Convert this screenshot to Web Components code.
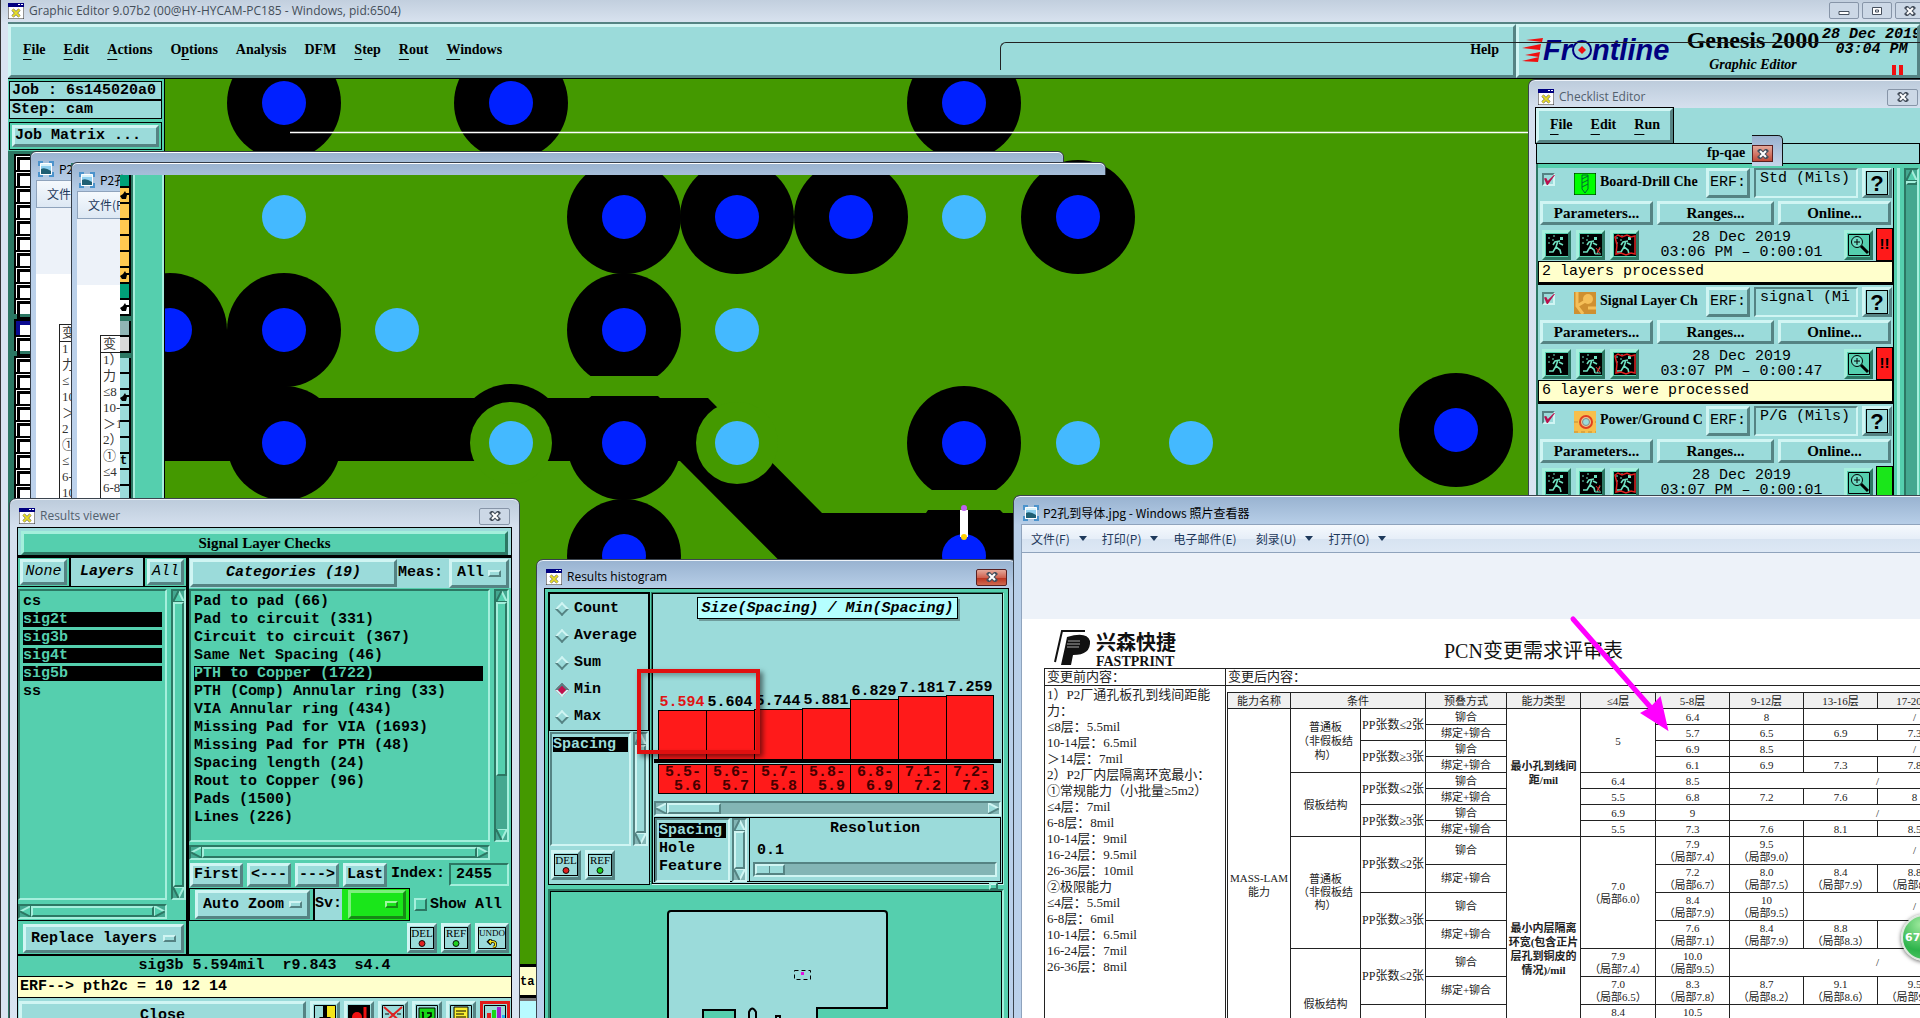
<!DOCTYPE html>
<html lang="zh-CN">
<head>
<meta charset="utf-8">
<title>Graphic Editor</title>
<style>
  html, body {
    margin: 0;
    height: 100%;
    overflow: hidden;
  }

  body {
    position: relative;
    font: 15px/18px "Liberation Mono", monospace;
    color: #000;
    --cyan: #9bdbda;
    --teal: #55cfae;
    --cyan-hi: #d0f5f3;
    --cyan-lo: #558383;
    --teal-hi: #a5efdc;
    --teal-lo: #2c7763;
  }

  /* windows on the desktop */
  ge-editor { height: 100%; }
  ghost-window, desk-window, fish-arrow, speed-ball { position: absolute; }
  #ghost-a { left: 30px; top: 151px; width: 1034px; height: 350px; clip-path: polygon(0 0, 100% 0, 100% 12px, 41px 12px, 41px 100%, 0 100%); }
  #ghost-b { left: 71px; top: 162px; width: 1035px; height: 340px; clip-path: polygon(0 0, 100% 0, 100% 13px, 49px 13px, 49px 100%, 0 100%); }
  #checklist { left: 1528px; right: 0; top: 79px; height: 420px; }
  #results { left: 9px; top: 498px; width: 511px; height: 560px; }
  #histogram { left: 536px; top: 559px; width: 481px; height: 480px; }
  #photo { left: 1013px; right: 0; top: 495px; height: 560px; }
  fish-arrow { left: 1560px; top: 606px; }
  speed-ball { right: -28px; top: 914px; }
</style>
</head>
<body>

<ge-editor></ge-editor>

<ghost-window id="ghost-a" heading="P2" menu="文件">
  变<br>1<br>力<br>≤<br>10<br>＞<br>2<br>①<br>≤<br>6-<br>10
</ghost-window>
<ghost-window id="ghost-b" heading="P2孔" menu="文件(F">
  变<br>1）<br>力<br>≤8<br>10-<br>＞1<br>2）<br>①<br>≤4<br>6-8
</ghost-window>

<desk-window id="checklist" heading="Checklist Editor" open-end>
  <checklist-editor>
    <check-item name="Board-Drill Che" erf="Std (Mils)" time="03:06 PM – 0:00:01" note="2 layers processed" icon="drill" flag="!!" first></check-item>
    <check-item name="Signal Layer Ch" erf="signal (Mi" time="03:07 PM – 0:00:47" note="6 layers were processed" icon="signal" flag="!!"></check-item>
    <check-item name="Power/Ground C" erf="P/G (Mils)" time="03:07 PM – 0:00:01" note="" icon="power" flag=""></check-item>
  </checklist-editor>
</desk-window>

<desk-window id="results" heading="Results viewer">
  <results-viewer></results-viewer>
</desk-window>

<desk-window id="histogram" heading="Results histogram" active>
  <results-histogram></results-histogram>
</desk-window>

<desk-window id="photo" heading="P2孔到导体.jpg - Windows 照片查看器" kind="photo" active open-end>
  <photo-viewer></photo-viewer>
</desk-window>

<fish-arrow></fish-arrow>
<speed-ball></speed-ball>

<script>
const define = (name, html, setup) => {
  const template = document.createElement('template')
  template.innerHTML = html
  customElements.define(name, class extends HTMLElement {
    constructor() {
      super()
      this.attachShadow({ mode: 'open' }).appendChild(template.content.cloneNode(true))
    }
    connectedCallback() {
      if (setup) setup(this, this.shadowRoot)
    }
  })
}

// rules every panel shares
const base = `
  * { box-sizing: border-box; }
  button, input, select { font: inherit; color: inherit; margin: 0; padding: 0; border-radius: 0; }
  .out { border: 3px solid; border-color: var(--cyan-hi) var(--cyan-lo) var(--cyan-lo) var(--cyan-hi); background: var(--cyan); }
  .in { border: 2px solid; border-color: var(--cyan-lo) var(--cyan-hi) var(--cyan-hi) var(--cyan-lo); }
  .teal-out { border: 3px solid; border-color: var(--teal-hi) var(--teal-lo) var(--teal-lo) var(--teal-hi); background: var(--teal); }
  .teal-in { border: 2px solid; border-color: var(--teal-lo) var(--teal-hi) var(--teal-hi) var(--teal-lo); }
  .serif { font: bold 15px/18px "Liberation Serif", serif; }
  .small { font-size: 14px; }
  b.u { text-decoration: underline; text-underline-offset: 5px; font-weight: inherit; }
  ul { list-style: none; margin: 0; padding: 0; }
`

const xIcon = `
  <svg width="16" height="16" viewBox="0 0 16 16">
    <path d="M0 1h16v15H0z" fill="#fff" stroke="#222"/><path d="M0 0h16v4H0z" fill="#000080"/><path d="M10 1h2v1h-2zM13 1h2v1h-2z" fill="#fff"/>
    <path d="M4.500 6.500l7 7M11.500 6.500l-7 7" stroke="#555" stroke-width="3"/><path d="M4.500 6.500l7 7M11.500 6.500l-7 7" stroke="#e6dc2c" stroke-width="2"/>
  </svg>`

const photoIcon = `
  <svg width="16" height="16" viewBox="0 0 16 16">
    <path d="M1 5V1h4M11 1h4v4M15 11v4h-4M5 15H1v-4" fill="none" stroke="#4b93cc" stroke-width="2"/>
    <path d="M2.500 2.500h11v11h-11z" fill="#8fd0f0" stroke="#fff"/><path d="M3 8q4-2 10 2v3H3z" fill="#1f5f74"/><path d="M3 3h10v2H3z" fill="#d9f2fb"/>
  </svg>`

const cross = `
  <svg width="12" height="10" viewBox="0 0 12 10">
    <path d="M3 2l6 6M9 2L3 8" stroke="#454f5c" stroke-width="4.200" stroke-linecap="square"/>
    <path d="M3 2l6 6M9 2L3 8" stroke="#fff" stroke-width="2"/>
  </svg>`

define('desk-window', `
  <style>
    ${base}
    :host {
      display: flex;
      flex-direction: column;
      box-sizing: border-box;
      padding: 0 7px;
      border: 1px solid #3b444e;
      border-radius: 7px 7px 0 0;
      background: linear-gradient(#bccbdb, #d5e0ee 28px, #d9e4f1);
      overflow: hidden;
      box-shadow: inset 0 1px #eef3f9;
    }
    :host([active]) { background: linear-gradient(#98b2d0, #b8cfe8 29px, #bbd1ec); }
    :host([open-end]) { padding-right: 0; border-right: 0; border-top-right-radius: 0; }
    header {
      display: flex;
      align-items: center;
      gap: 5px;
      flex: none;
      height: 28px;
      padding: 6px 2px 0;
      font: 12px/18px "Open Sans", "Noto Sans CJK SC", sans-serif;
      color: #52606d;
    }
    :host([active]) header { color: #000; }
    span { flex: 1; white-space: nowrap; }
    button {
      display: grid;
      place-items: center;
      width: 31px;
      height: 17px;
      border: 1px solid #8795a8;
      border-radius: 2px;
      background: #ccd8e6;
    }
    :host([active]) button { border-color: #5a2020; background: linear-gradient(#e5a99b, #cf6250 50%, #b8301c 51%, #d06a50); }
    :host([kind=photo]) button { display: none; }
    :host([kind=photo]) header { font-family: "Noto Sans CJK SC", sans-serif; gap: 4px; }
    slot { display: block; flex: 1; min-height: 0; }
  </style>
  <header><i></i><span></span><button aria-label="Close">${cross}</button></header>
  <slot></slot>
`, (el, root) => {
  root.querySelector('span').textContent = el.getAttribute('heading')
  root.querySelector('i').outerHTML = el.getAttribute('kind') === 'photo' ? photoIcon : xIcon
})

define('ghost-window', `
  <style>
    ${base}
    :host {
      display: flex;
      flex-direction: column;
      box-sizing: border-box;
      padding: 0 6px 0 5px;
      border: 1px solid #333b46;
      border-radius: 6px 6px 0 0;
      background: linear-gradient(#9ab3d0, #b9cfe8 30px, #bdd2ec);
      box-shadow: inset 0 1px #fff;
      overflow: hidden;
    }
    header, nav { flex: none; display: flex; align-items: center; font: 12px/18px "Noto Sans CJK SC", sans-serif; white-space: nowrap; }
    header { height: 28px; gap: 5px; padding: 6px 2px 0; }
    nav { height: 28px; padding-left: 10px; color: #1e395b; border: 1px solid #8fa3bc; background: linear-gradient(#f5f9fd, #dde8f4); }
    .gap { flex: none; height: 66px; background: #edf2f9; }
    main { flex: 1; background: #fff; padding: 50px 0 0 23px; }
    p { margin: 0; padding-left: 2px; border: solid #222; border-width: 1px 0 0 1px; height: 400px; font: 13px/16px "Liberation Serif", "Noto Sans CJK SC", serif; color: #333; white-space: nowrap; background: linear-gradient(#222, #222) 0 16px / 100% 1px no-repeat; }
  </style>
  <header>${photoIcon}<span></span></header>
  <nav></nav>
  <div class="gap"></div>
  <main><p><slot></slot></p></main>
`, (el, root) => {
  root.querySelector('span').textContent = el.getAttribute('heading')
  root.querySelector('nav').textContent = el.getAttribute('menu')
})

define('motif-scroll', `
  <style>
    ${base}
    :host { display: flex; box-sizing: border-box; height: 15px; --hi: var(--teal-hi); --lo: var(--teal-lo); --face: var(--teal); --trough: #44a890; border: 2px solid; border-color: var(--lo) var(--hi) var(--hi) var(--lo); background: var(--trough); }
    :host([cyan]) { --hi: var(--cyan-hi); --lo: var(--cyan-lo); --face: var(--cyan); --trough: #83b5b5; }
    :host([vertical]) { flex-direction: column; width: 15px; height: auto; }
    svg { flex: none; width: 11px; height: 11px; fill: var(--face); }
    :host([vertical]) svg { transform: rotate(90deg); }
    i { flex: 0 1 var(--thumb, 100%); border: 2px solid; border-color: var(--hi) var(--lo) var(--lo) var(--hi); background: var(--face); }
    s { flex: 1 0 0px; }
  </style>
  <svg viewBox="0 0 11 11"><path d="M11 0L0 5.500 11 11z"/><path d="M11 0L0 5.500" stroke="var(--hi)" stroke-width="2"/><path d="M0 5.500L11 11V0" fill="none" stroke="var(--lo)" stroke-width="2"/></svg>
  <i></i><s></s>
  <svg viewBox="0 0 11 11"><path d="M0 0l11 5.500L0 11z"/><path d="M0 11V0l11 5.500" fill="none" stroke="var(--hi)" stroke-width="2"/><path d="M11 5.500L0 11" stroke="var(--lo)" stroke-width="2"/></svg>
`)

define('motif-option', `
  <style>
    ${base}
    :host { display: block; font-weight: bold; }
    .out { display: flex; align-items: center; height: 29px; padding: 0 5px; }
    select { flex: 1; min-width: 0; appearance: none; border: 0; background: none; }
    i { width: 13px; height: 7px; border: 2px solid; border-color: var(--cyan-hi) var(--cyan-lo) var(--cyan-lo) var(--cyan-hi); }
    :host([green]) .out { background: #1ae61a; border-color: #7cf07c #168a16 #168a16 #7cf07c; }
    :host([green]) i { border-color: #a0f8a0 #168a16 #168a16 #a0f8a0; }
  </style>
  <div class="out"><select><option></option></select><i></i></div>
`, (el, root) => {
  root.querySelector('option').textContent = el.getAttribute('value')
  root.querySelector('select').setAttribute('aria-label', el.getAttribute('name'))
})

// DEL / REF / UNDO
define('tag-button', `
  <style>
    ${base}
    :host { display: block; }
    button { display: block; width: 30px; height: 30px; padding: 1px 0; }
    span { display: flex; flex-direction: column; align-items: center; height: 22px; border: 1px solid #000; font: 11px/11px "Liberation Serif", serif; }
    :host([wide]) button { width: 34px; }
    :host([wide]) span { font-size: 9px; }
    svg { flex: none; }
  </style>
  <button class="out"><span><slot></slot><svg width="12" height="9" viewBox="0 0 12 10"><circle cx="6" cy="5" r="3.300" stroke="#000"/></svg></span></button>
`, (el, root) => {
  const svg = root.querySelector('svg')
  if (el.hasAttribute('wide')) svg.innerHTML = '<path d="M3 3h4q3 0 3 3t-3 3M5 0L2 3l3 3" fill="none" stroke="#000" stroke-width="3"/><path d="M3 3h4q3 0 3 3t-3 3M5 1L3 3l2 2" fill="none" stroke="#f5e51b" stroke-width="1.400"/>'
  else svg.firstChild.setAttribute('fill', el.getAttribute('dot'))
})

/* ---------- main editor ---------- */

define('pcb-board', `
  <style>
    :host { display: block; background: #449900; overflow: hidden; }
    svg { display: block; width: 100%; height: 100%; }
  </style>
  <svg><g transform="translate(-165 -79)"></g></svg>
`, (el, root) => {
  const g = root.querySelector('g')
  const green = '#449900'
  const dot = (x, y, r, fill) => `<circle cx="${x}" cy="${y}" r="${r}" fill="${fill}"/>`
  const holes = [
    [284, 103], [511, 103], [964, 103],
    [624, 217], [737, 217], [851, 217], [1078, 217],
    [170, 330], [284, 330], [624, 330],
    [284, 443], [624, 443], [964, 443], [1456, 430],
    [624, 556], [964, 556]
  ]
  const vias = [[284, 217], [964, 217], [397, 330], [737, 330], [511, 443], [737, 443], [1078, 443], [1191, 443]]
  let out = holes.map(([x, y]) => dot(x, y, 57, '#000')).join('')
  // flats where a pad meets copper
  out += `<path d="M580 376h88v20h-88zM915 490h98v20h-98z" fill="${green}"/>`
  out += '<path d="M454 443a57 59 0 0 1 114 0z"/>'
  out += '<path d="M165 330H284V398H590L592 396H658L660 398H708L822 513H926L928 510H1000L1003 513H1530V700H918L680 461H165z"/>'
  out += dot(511, 443, 41, green) + dot(737, 443, 41, green)
  holes.forEach(([x, y]) => { out += dot(x, y, 22, '#0020ff') })
  vias.forEach(([x, y]) => { out += dot(x, y, 22, '#44b9ff') })
  out += '<path d="M290 132.500H1530" stroke="#fff" stroke-width="1.500"/>'
  out += '<path d="M960 510h8v27h-8z" fill="#fff"/>' + dot(964, 508, 3, '#c060f0') + dot(964, 537, 3, '#ffd000')
  g.innerHTML = out
})

define('ge-editor', `
  <style>
    ${base}
    :host { display: grid; grid-template-rows: 22px 57px 1fr; background: #d9e4f1; border-left: 1px solid #333; padding-left: 7px; box-sizing: border-box; }
    header { display: flex; align-items: center; gap: 5px; margin-left: -7px; padding-left: 7px; overflow: hidden; background: linear-gradient(#c2cfde, #d8e2ef); font: 12px/18px "Open Sans", sans-serif; color: #444e59; }
    header span { flex: 1; }
    header button { display: grid; place-items: center; flex: none; align-self: start; margin-top: 2px; width: 30px; height: 17px; margin-right: -2px; border: 1px solid #8795a8; border-radius: 2px; background: #ccd8e6; }
    header button:last-child { margin-right: -5px; }
    .top { display: grid; grid-template-columns: 1fr 404px; border-bottom: 1px solid #000; border-top: 2px solid var(--cyan-lo); }
    nav { display: flex; gap: 18px; align-items: center; padding: 0 14px 3px 12px; }
    nav a { color: inherit; text-decoration: none; }
    .brand { display: grid; grid-template-columns: 162px 138px 1fr; padding-left: 3px; overflow: hidden; white-space: nowrap; }
    .logo { display: flex; align-items: center; font: italic bold 29px/30px "Liberation Sans", sans-serif; color: #000080; padding-bottom: 3px; }
    .logo svg { flex: none; }
    .name { display: grid; align-content: start; text-align: center; font: bold 24px/27px "Liberation Serif", serif; }
    .name em { font-size: 14px; line-height: 22px; }
    .clock { display: grid; align-content: start; justify-items: center; font: italic bold 15px/15px "Liberation Mono", monospace; }
    .clock svg { margin: 8px 0 0 52px; }
    .work { display: grid; grid-template-columns: 156px 1fr; min-height: 0; }
    aside { display: flex; flex-direction: column; min-height: 0; background: var(--teal-lo); }
    .job { flex: none; padding: 2px 2px 0 1px; height: 72px; background: var(--teal); font-weight: bold; }
    .job p { margin: 0; width: 124px; height: 19px; padding: 0 2px; border: 1px solid #000; background: var(--cyan); width: 100%; }
    .job div { margin-top: 3px; padding: 2px; border: 1px solid #000; background: var(--teal); }
    .job button { display: block; width: 100%; height: 22px; text-align: left; font-weight: bold; line-height: 14px; }
    .layers { display: flex; flex: 1; padding-left: 6px; min-height: 0; overflow: hidden; }
    .col { padding-top: 3px; width: 16px; }
    .col i { display: block; width: 16px; height: 16px; padding: 1px; border: solid #000; border-width: 2px 0 0 2px; background: #fff; }
    .col i::before { content: ""; display: block; width: 13px; height: 13px; border: 3px solid #000; }
    .col i.gap, .side i.gap { margin-top: 5px; }
    .col i.on { background: #0a0a90; }
    .col i.on::before { border-color: #0a0a90; background: #fff; }
    .side { width: 11px; margin-left: 90px; padding-top: 21px; }
    .side i { display: block; width: 11px; height: 16px; border-bottom: 2px solid #000; border-right: 2px solid #000; background: var(--c, var(--cyan)); font: bold 12px/14px "Liberation Mono", monospace; }
    .sash { width: 31px; margin-left: 2px; border: 2px solid var(--teal-hi); background: var(--teal); }
    .frame { position: absolute; left: 1000px; right: 0; top: 42px; height: 28px; border: solid #222; border-width: 1px 0 0 1px; border-radius: 6px 0 0 0; pointer-events: none; }
    .strip { position: absolute; left: 520px; top: 964px; width: 16px; height: 34px; padding-top: 8px; border-top: 3px solid #000; border-bottom: 3px solid #000; background: #ffffcc; font: bold 12px/14px "Liberation Mono", monospace; }
    .below { position: absolute; left: 520px; top: 998px; width: 16px; height: 30px; border-top: 3px solid #777; background: #b8fbff; }
    pcb-board { border-left: 1px solid #000; }
  </style>
  <header>
    ${xIcon}<span>Graphic Editor 9.07b2 (00@HY-HYCAM-PC185 - Windows, pid:6504)</span>
    <button aria-label="Minimize"><svg width="12" height="10"><path d="M1 5.500h10v3H1z" fill="#fff" stroke="#454f5c"/></svg></button>
    <button aria-label="Maximize"><svg width="12" height="10"><path d="M1.500 1.500h9v7h-9zM4.500 4h3v2h-3z" fill="#fff" stroke="#454f5c"/></svg></button>
    <button aria-label="Close">${cross}</button>
  </header>
  <div class="top">
    <nav class="out serif small">
      <a href="#"><b class="u">F</b>ile</a><a href="#"><b class="u">E</b>dit</a><a href="#"><b class="u">A</b>ctions</a><a href="#">O<b class="u">p</b>tions</a><a href="#">Analysis</a><a href="#">DFM</a><a href="#"><b class="u">S</b>tep</a><a href="#"><b class="u">R</b>out</a><a href="#"><b class="u">W</b>indows</a>
      <a href="#" style="margin-left: auto">Help</a>
    </nav>
    <div class="brand out">
      <div class="logo">
        <svg width="21" height="26" viewBox="0 0 21 26"><path d="M4 3l17-2-1 4zM0 11l19-4-1 6zM3 18l15-3-1 5zM0 24l17-4-1 5z" fill="#f01010"/></svg>Fr<svg width="20" height="22" viewBox="0 0 20 22"><circle cx="10" cy="11" r="9" fill="none" stroke="#000080" stroke-width="2"/><path d="M10 7l4 4-4 4-4-4z" fill="#f01010"/></svg>ntline
      </div>
      <div class="name">Genesis 2000<em>Graphic Editor</em></div>
      <div class="clock"><span>28 Dec 2019</span><span>03:04 PM</span><svg width="11" height="10"><path d="M0 0h4v10H0zM7 0h4v10H7z" fill="#f01010"/></svg></div>
    </div>
  </div>
  <div class="work">
    <aside>
      <div class="job">
        <p>Job : 6s145020a0</p>
        <p>Step: cam</p>
        <div><button class="out">Job Matrix ...</button></div>
      </div>
      <div class="layers"><div class="col"></div><div class="side"></div><div class="sash"></div></div>
    </aside>
    <pcb-board></pcb-board>
  </div>
  <div class="frame"></div>
  <div class="strip">ta</div>
  <div class="below"></div>
`, (el, root) => {
  const gaps = [10, 12]
  const colour = i => i === 0 || i === 7 ? '#00a078' : i < 7 ? '#ffc850' : i === 8 ? '#fff' : i === 9 ? '#90b5b5' : i === 10 ? '#d8d8d8' : ''
  const hand = '<svg width="9" height="14" viewBox="0 0 9 14"><path d="M0 8l3-2 2-3 1 2h3v2H7l-1 4H2z"/></svg>'
  for (let i = 0; i < 22; i++) {
    root.querySelector('.col').insertAdjacentHTML('beforeend', `<i class="${gaps.includes(i) ? 'gap' : ''} ${i === 10 ? 'on' : ''}"></i>`)
  }
  for (let i = 0; i < 21; i++) {
    const c = colour(i)
    const mark = [1, 6, 8, 13].includes(i) ? hand : i === 17 ? 't' : ''
    root.querySelector('.side').insertAdjacentHTML('beforeend', `<i class="${i === 9 || i === 11 ? 'gap' : ''}" style="${c && `--c: ${c}`}">${mark}</i>`)
  }
})

/* ---------- checklist ---------- */

define('checklist-editor', `
  <style>
    ${base}
    :host { display: block; background: var(--cyan); }
    nav { display: flex; gap: 18px; width: 137px; height: 35px; padding: 5px 11px; outline: 1px solid #000; }
    nav a { color: inherit; text-decoration: none; }
    h2 { margin: 0; height: 21px; padding-left: 170px; border: 1px solid #000; }
    .body { display: flex; background: var(--teal); padding-top: 4px; border-left: 2px solid var(--teal-lo); }
    .items { flex: none; width: 356px; border-right: 1px solid #000; }
    .rail { flex: none; display: flex; margin-left: 3px; padding-left: 4px; border-left: 3px solid var(--teal-hi); height: 400px; --thumb: 67%; }
    .rail motif-scroll { --thumb: 1px; }
    i.thumb { display: none; }
    /* leftover of a dragged window */
    .trail { position: absolute; left: 223px; top: 55px; width: 31px; height: 31px; border-top: 1px solid #111; border-right: 1px solid #111; border-radius: 0 5px 0 0; background: linear-gradient(#9ab3d0, #c5d6ea); }
    .trail i { display: grid; place-items: center; margin-top: 9px; width: 21px; height: 17px; border: 1px solid #5a2020; background: linear-gradient(#e5a99b, #c04a38); }
  </style>
  <nav class="out serif small"><a href="#"><b class="u">F</b>ile</a><a href="#"><b class="u">E</b>dit</a><a href="#"><b class="u">R</b>un</a></nav>
  <h2 class="serif small">fp-qae</h2>
  <div class="body">
    <div class="items"><slot></slot></div>
    <div class="rail"><motif-scroll vertical style="--thumb: 1px"></motif-scroll></div>
  </div>
  <div class="trail"><i>${cross}</i></div>
`)

const checkIcons = {
  drill: '<path d="M0 0h22v22H0z" fill="#0f0" stroke="#000"/><path d="M8 2h6v14l-3 4-3-4zM8 6l6-3M8 10l6-3M8 14l6-3" fill="none" stroke="#063"/>',
  signal: '<path d="M0 0h22v22H0z" fill="#cf9030"/><circle cx="14" cy="7" r="5" fill="#f5bf58"/><path d="M3 0v14l6 8M3 14L13 8M14 16h8" stroke="#f5bf58" stroke-width="3" fill="none"/>',
  power: '<path d="M0 0h22v22H0z" fill="#f7bf4c"/><path d="M0 21h22M0 11h22" stroke="#c38b30" stroke-dasharray="4 3"/><circle cx="12" cy="11" r="6" fill="#e9c890" stroke="#e04020" stroke-width="2"/><circle cx="12" cy="11" r="3.500" fill="#9bdbda" stroke="#888"/>'
}

const runner = extra => `
  <svg width="22" height="22" viewBox="0 0 22 22"><path d="M0 0h22v22H0z"/>
    <path d="M14 3h3v3h-3z" fill="#6fe0c0"/><path d="M14 7l-5 1-2 3M12 7l-2 6 4 3 1 4M10 13l-3 5H3M13 9l4 2" fill="none" stroke="#6fe0c0" stroke-width="1.600"/>
    <path d="M2 4h2M6 6h2M2 9h2M7 2h2" stroke="#6fe0c0"/>${extra}</svg>`

define('check-item', `
  <style>
    ${base}
    :host { display: block; box-sizing: border-box; height: 119px; border-bottom: 2px solid #000; background: var(--cyan); overflow: hidden; }
    :host([first]) { height: 117px; }
    :host([first]) .head { height: 32px; padding-top: 0; }
    .head { display: flex; gap: 4px; height: 34px; padding: 2px 1px 0 4px; }
    .head input[type=checkbox] { appearance: none; width: 13px; height: 13px; margin: 5px 0 0; border: 2px solid; border-color: var(--cyan-lo) var(--cyan-hi) var(--cyan-hi) var(--cyan-lo); flex: none; }
    input[type=checkbox]:checked::before { content: ""; display: block; width: 11px; height: 10px; background: #b8104c; clip-path: polygon(0 35%, 20% 30%, 35% 60%, 90% 0, 100% 0, 35% 100%, 25% 100%); }
    .head svg { flex: none; margin: 5px 0 0 15px; }
    label { flex: 1; min-width: 0; margin-top: 5px; white-space: nowrap; overflow: hidden; }
    .erf { flex: none; width: 44px; height: 30px; }
    .head input[type=text] { width: 104px; height: 30px; padding: 0 0 10px 4px; background: none; }
    .help { display: grid; place-items: center; width: 30px; height: 30px; flex: none; }
    .help span { width: 22px; height: 24px; border: 1px solid #000; font: bold 22px/23px "Liberation Sans", sans-serif; }
    .row { display: grid; grid-template-columns: 113px 117px 113px; gap: 4px; padding: 1px 2px 0; height: 28px; }
    .row button { height: 24px; line-height: 16px; }
    .run { display: flex; align-items: center; gap: 5px; height: 33px; padding-left: 4px; }
    .run button { display: grid; place-items: center; flex: none; width: 29px; height: 30px; }
    p { flex: 1; margin: 0; text-align: center; line-height: 15px; white-space: nowrap; }
    .flag { align-self: stretch; margin-left: -2px; width: 17px; border: 1px solid #000; background: #ff1a1a; text-align: center; font: bold 15px/30px "Liberation Sans", sans-serif; }
    .flag:empty { background: #1ae61a; }
    .note { height: 22px; padding: 1px 3px; border: 1px solid #000; background: #ffffcc; }
  </style>
  <div class="head">
    <input type="checkbox" id="on" checked>
    <svg width="22" height="22" viewBox="0 0 22 22"></svg>
    <label class="serif small" for="on"></label>
    <button class="out erf">ERF:</button>
    <input type="text" class="in" aria-label="ERF">
    <button class="out help"><span>?</span></button>
  </div>
  <div class="row"><button class="out serif">Parameters...</button><button class="out serif">Ranges...</button><button class="out serif">Online...</button></div>
  <div class="run">
    <button class="teal-out" aria-label="Run">${runner('')}</button>
    <button class="teal-out" aria-label="Run and review">${runner('<path d="M15 20h6M20 14l-3 6" stroke="#6fe0c0"/><path d="M16 14l4 5M20 13l-3 6" stroke="#e02020"/>')}</button>
    <button class="teal-out" aria-label="Run region">${runner('<path d="M1 3l3-2 4 2 5-2 4 2 4-1v18l-4-1-5 2-5-2-5 1 1-9z" fill="none" stroke="#e02020" stroke-width="1.500"/>')}</button>
    <p>28 Dec 2019<br><span></span></p>
    <button class="teal-out" aria-label="Zoom"><svg width="22" height="22" viewBox="0 0 22 22"><path d="M.5.5h21v21H.5z" fill="none" stroke="#000"/><circle cx="9" cy="8" r="5.500" fill="#6fdcc4" stroke="#000"/><path d="M9 5v6M6 8h6" stroke="#000"/><path d="M13 12l7 7" stroke="#000" stroke-width="3"/></svg></button>
    <div class="flag"></div>
  </div>
  <div class="note"></div>
`, (el, root) => {
  const get = name => el.getAttribute(name)
  root.querySelector('.head svg').innerHTML = checkIcons[get('icon')]
  root.querySelector('label').textContent = get('name')
  root.querySelector('input[type=text]').value = get('erf')
  root.querySelector('p span').textContent = get('time')
  root.querySelector('.flag').textContent = get('flag')
  root.querySelector('.note').textContent = get('note')
})

/* ---------- results viewer ---------- */

define('results-viewer', `
  <style>
    ${base}
    :host { display: block; border: 1px solid #000; background: var(--cyan); font-weight: bold; }
    .title { padding: 3px; height: 30px; border-bottom: 3px solid #000; }
    .title button { width: 100%; height: 24px; line-height: 16px; }
    .cols { display: grid; grid-template-columns: 171px 1fr; height: 398px; border-bottom: 2px solid #000; background: var(--teal); }
    .left, .right { display: flex; flex-direction: column; min-width: 0; min-height: 0; }
    .left { border-right: 3px solid #000; }
    .pick { display: grid; grid-template-columns: 51px 1fr 41px; height: 29px; flex: none; border-bottom: 1px solid #000; font-style: italic; text-align: center; }
    .pick span { background: var(--cyan); border: solid #000; border-width: 0 2px; line-height: 28px; }
    .pick button { margin: 1px 2px; font-weight: normal; font-style: italic; }
    .lists { display: grid; grid-template-columns: 1fr 15px; grid-template-rows: 1fr 15px; column-gap: 4px; row-gap: 4px; padding: 2px 0 1px; flex: 1; min-height: 0; }
    .lists ul { padding: 3px; }
    .right ul { padding: 3px 5px 3px 3px; }
    li { height: 15px; margin-bottom: 3px; line-height: 15px; white-space: nowrap; }
    li.on { background: #000; color: var(--teal); }
    .replace { flex: none; padding: 3px 2px 0 5px; border-top: 1px solid #000; background: var(--teal); height: 34px; }
    .cats { flex: none; display: flex; align-items: center; height: 30px; padding: 0 2px 0 1px; background: var(--cyan); }
    .cats .cat { flex: none; width: 207px; height: 28px; font-style: italic; }
    .cats span { margin: 0 6px 0 1px; }
    .cats motif-option { flex: 1; }
    .right .lists { padding: 1px 2px 3px 0; row-gap: 3px; }
    .steps { flex: none; display: flex; gap: 4px; height: 25px; padding-left: 1px; align-items: start; }
    .steps button { height: 24px; line-height: 16px; width: 44px; flex: none; font-weight: bold; white-space: nowrap; text-align: center; }
    .steps .first { width: 53px; }
    .steps label { display: flex; gap: 4px; flex: 1; line-height: 22px; }
    .steps input { min-width: 0; flex: 1; width: 0; height: 23px; padding-left: 5px; background: none; margin-right: 2px; font-weight: bold; }
    .zoom { flex: none; display: flex; align-items: center; height: 33px; }
    .zoom .black { display: flex; align-items: center; width: 221px; height: 33px; border: 1px solid #000; }
    .zoom .auto { width: 123px; padding: 0 3px 0 5px; }
    .zoom span { align-self: stretch; border-left: 2px solid #000; background: var(--cyan); line-height: 30px; }
    .zoom .sv { flex: 1; background: #1ae61a; padding: 1px 3px 1px 6px; }
    .zoom label { display: flex; align-items: center; gap: 3px; margin-left: 4px; }
    .zoom input { appearance: none; width: 13px; height: 13px; border: 2px solid; border-color: var(--teal-hi) var(--teal-lo) var(--teal-lo) var(--teal-hi); }
    .tags { flex: none; display: flex; gap: 4px; justify-content: flex-end; padding: 2px 2px; height: 33px; }
    .stat { margin: 0; height: 20px; line-height: 20px; white-space: pre; text-align: center; background: var(--teal); }
    .erf { height: 22px; padding: 1px 2px; border: solid #000; border-width: 1px 0; background: #ffffcc; }
    .foot { display: flex; gap: 4px; padding: 3px 1px; }
    .foot .close { flex: 1; font-weight: bold; }
    .foot button { height: 30px; width: 30px; padding: 0; }
    .foot svg { display: block; margin: auto; }
  </style>
  <div class="title"><button class="teal-out serif">Signal Layer Checks</button></div>
  <div class="cols">
    <div class="left">
      <div class="pick"><button class="out">None</button><span>Layers</span><button class="out">All</button></div>
      <div class="lists">
        <ul class="teal-in"><li>cs</li><li class="on">sig2t</li><li class="on">sig3b</li><li class="on">sig4t</li><li class="on">sig5b</li><li>ss</li></ul>
        <motif-scroll vertical></motif-scroll>
        <motif-scroll></motif-scroll>
      </div>
      <div class="replace"><motif-option name="Layer mode" value="Replace layers"></motif-option></div>
    </div>
    <div class="right">
      <div class="cats"><button class="out cat"><b>Categories (19)</b></button><span>Meas:</span><motif-option name="Meas" value="All"></motif-option></div>
      <div class="lists">
        <ul class="teal-in">
          <li>Pad to pad (66)</li><li>Pad to circuit (331)</li><li>Circuit to circuit (367)</li><li>Same Net Spacing (46)</li>
          <li class="on">PTH to Copper (1722)</li><li>PTH (Comp) Annular ring (33)</li><li>VIA Annular ring (434)</li>
          <li>Missing Pad for VIA (1693)</li><li>Missing Pad for PTH (48)</li><li>Spacing length (24)</li><li>Rout to Copper (96)</li>
          <li>Pads (1500)</li><li>Lines (226)</li>
        </ul>
        <motif-scroll vertical style="--thumb: 70%"></motif-scroll>
        <motif-scroll></motif-scroll>
      </div>
      <div class="steps">
        <button class="out first">First</button><button class="out">&lt;---</button><button class="out">---&gt;</button><button class="out">Last</button>
        <label>Index:<input class="teal-in" value="2455"></label>
      </div>
      <div class="zoom">
        <div class="black"><motif-option class="auto" name="Zoom mode" value="Auto Zoom"></motif-option><span>Sv:</span><motif-option class="sv" name="Severity" value="" green></motif-option></div>
        <label><input type="checkbox">Show All</label>
      </div>
      <div class="tags"><tag-button dot="#e02020">DEL</tag-button><tag-button dot="#20d020">REF</tag-button><tag-button wide>UNDO</tag-button></div>
    </div>
  </div>
  <p class="stat">sig3b 5.594mil  r9.843  s4.4</p>
  <div class="erf">ERF--&gt; pth2c = 10 12 14</div>
  <div class="foot">
    <button class="out close">Close</button>
    <button class="out" aria-label="Import"><svg width="22" height="22"><path d="M0 0h11v22H0z" fill="#9bdbda"/><path d="M11 0h11v22H11z" fill="#f5e51b"/><path d="M.5.5h21v21H.5z" fill="none" stroke="#000"/><path d="M9 0h4v12h4l-6 7-6-7h4z"/></svg></button>
    <button class="out" aria-label="Stop"><svg width="22" height="22"><path d="M0 0h22v22H0z"/><circle cx="9" cy="12" r="5" fill="#f01010"/><path d="M17 2v18" stroke="#f01010" stroke-width="3"/></svg></button>
    <button class="out" aria-label="Clear reference"><svg width="22" height="22"><path d="M.5.5h21v21H.5z" fill="none" stroke="#000"/><path d="M3 9h16M4 14h14" stroke="#000" stroke-dasharray="4 2"/><path d="M2 2l18 16M20 2L2 18" stroke="#e02020" stroke-width="2"/></svg></button>
    <button class="out" aria-label="Numbers"><svg width="22" height="22"><path d="M.5.5h21v21H.5z" fill="#9bdbda" stroke="#000"/><path d="M3 3h16v16H3z" fill="#18d818" stroke="#000"/><path d="M7 7v7M6 8l1-1M11 8h4v3l-4 3h5" fill="none" stroke="#000" stroke-width="1.600"/></svg></button>
    <button class="out" aria-label="Report"><svg width="22" height="22"><path d="M.5.5h21v21H.5z" fill="#9bdbda" stroke="#000"/><path d="M4 2h14v18H4z" fill="#f8ee30" stroke="#000"/><path d="M6 6h10M6 9h8M6 12h10M6 15h7" stroke="#000"/></svg></button>
    <button class="out" aria-label="Histogram" style="border-color: #e01a1a"><svg width="22" height="22"><path d="M.5.5h21v21H.5z" fill="#9bdbda" stroke="#000"/><path d="M3 8h4v14H3z" fill="#e02020"/><path d="M8 5h4v17H8z" fill="#18d818"/><path d="M13 2h4v20h-4z" fill="#a020d0"/><path d="M18 10h3v12h-3z" fill="#20b0f0"/></svg></button>
  </div>
`)

/* ---------- histogram ---------- */

define('results-histogram', `
  <style>
    ${base}
    :host { display: block; box-sizing: border-box; height: 100%; padding: 3px 4px 0 3px; border: 1px solid #000; background: var(--teal); font-weight: bold; }
    .panel { display: grid; grid-template-columns: 102px 1fr; height: 289px; }
    .pane { display: flex; flex-direction: column; border: 1px solid #000; background: var(--cyan); }
    fieldset { margin: 0; padding: 1px 0 0 5px; border: 1px solid #000; height: 138px; }
    fieldset label { display: flex; align-items: center; gap: 7px; height: 27px; }
    input[type=radio] { appearance: none; width: 10px; height: 10px; margin: 0 0 0 2px; transform: rotate(45deg); border: 2px solid; border-color: var(--cyan-hi) var(--cyan-lo) var(--cyan-lo) var(--cyan-hi); }
    input[type=radio]:checked { background: #c0104c; border-color: var(--cyan-lo) var(--cyan-hi) var(--cyan-hi) var(--cyan-lo); }
    .pick { display: flex; justify-content: space-between; height: 115px; padding: 1px 1px 0; }
    .pick ul { width: 81px; padding: 3px 1px; }
    li { height: 15px; margin-bottom: 3px; line-height: 15px; }
    li.on { background: #000; color: var(--cyan); }
    .tags { display: flex; gap: 4px; padding: 4px 2px; }
    .chart { display: flex; flex-direction: column; margin-left: 1px; border: 2px solid; border-color: var(--teal-lo) var(--teal-hi) var(--cyan-hi) var(--teal-lo); background: var(--cyan); outline: 1px solid #000; outline-offset: -2px; padding: 1px; }
    h3 { align-self: center; margin: 2px 0 0; height: 22px; padding: 2px 3px; border: 1px solid #000; background: #b5ffff; font: italic bold 15px/18px "Liberation Mono", monospace; box-shadow: 2px 2px #6f9c9c; }
    .bars { display: flex; align-items: flex-end; flex: 1; padding-left: 4px; border-bottom: 4px solid #000; }
    .bars div { width: 48px; text-align: center; line-height: 15px; }
    .bars i { display: block; height: var(--h); border: solid #000; border-width: 1px 0 0 1px; background: #ff1a1a; }
    .bars div:first-child { color: #e01414; }
    .bars div:last-child i, .keys div:last-child { border-right-width: 1px; }
    .keys { display: flex; padding: 1px 0 7px 4px; }
    .keys div { width: 48px; height: 30px; padding-left: 6px; border: solid #000; border-width: 1px 0 1px 1px; background: #ff1a1a; color: #400; line-height: 14px; white-space: pre; padding-top: 1px; }
    .low { display: grid; grid-template-columns: 75px 15px 1fr; column-gap: 2px; height: 65px; margin-top: 1px; border: 1px solid #000; }
    .low ul { padding: 3px 2px; }
    .res { border-left: 1px solid #000; padding: 2px 3px; display: flex; flex-direction: column; }
    .res label { text-align: center; }
    output { padding-left: 4px; margin-top: 4px; }
    input[type=range] { appearance: none; width: 100%; height: 15px; margin-top: 2px; background: #83b5b5; }
    input[type=range]::-webkit-slider-thumb { appearance: none; width: 30px; height: 11px; border: 2px solid; border-color: var(--cyan-hi) var(--cyan-lo) var(--cyan-lo) var(--cyan-hi); background: linear-gradient(90deg, var(--cyan) 12px, var(--cyan-lo) 12px, var(--cyan-lo) 13px, var(--cyan) 13px); }
    .sash { display: flex; justify-content: flex-end; height: 8px; padding-right: 6px; border-top: 1px solid var(--teal-lo); box-shadow: inset 0 1px var(--teal-hi); }
    .sash i { width: 9px; height: 8px; border: 2px solid; border-color: var(--teal-hi) var(--teal-lo) var(--teal-lo) var(--teal-hi); }
    .map { height: 200px; border: 2px solid; border-color: var(--teal-lo) var(--teal-hi) var(--teal-hi) var(--teal-lo); outline: 1px solid #000; outline-offset: -3px; overflow: hidden; }
    /* hand-drawn marker over the first two bars */
    .mark { position: absolute; left: 100px; top: 109px; width: 123px; height: 85px; border: 4px solid #e01010; box-shadow: 3px 3px 5px rgba(0, 0, 0, .5), inset 3px 3px 5px rgba(0, 0, 0, .3); }
  </style>
  <div class="panel">
    <div class="pane">
      <fieldset>
        <label><input type="radio" name="f">Count</label><label><input type="radio" name="f">Average</label><label><input type="radio" name="f">Sum</label><label><input type="radio" name="f" checked>Min</label><label><input type="radio" name="f">Max</label>
      </fieldset>
      <div class="pick"><ul class="in"><li class="on">Spacing</li></ul><motif-scroll vertical cyan></motif-scroll></div>
      <div class="tags"><tag-button dot="#e02020">DEL</tag-button><tag-button dot="#20d020">REF</tag-button></div>
    </div>
    <div class="chart">
      <h3>Size(Spacing) / Min(Spacing)</h3>
      <div class="bars"></div>
      <div class="keys"></div>
      <motif-scroll cyan style="--thumb: 54px"></motif-scroll>
      <div class="low">
        <ul class="in"><li class="on">Spacing</li><li>Hole</li><li>Feature</li></ul>
        <motif-scroll vertical cyan></motif-scroll>
        <div class="res"><label for="res">Resolution</label><output>0.1</output><input id="res" type="range" class="in" min="0" max="10" value="0"></div>
      </div>
    </div>
  </div>
  <div class="sash"><i></i></div>
  <div class="map">
    <svg width="100%" height="140"><g transform="translate(-550 -891)">
      <path d="M668 1030V914q0-3 3-3H884q3 0 3 3V1008H817V1030" fill="#9bdbda" stroke="#000" stroke-width="2"/>
      <path d="M703 1030V1010h32v20" fill="#55cfae" stroke="#000" stroke-width="2"/><path d="M749 1030v-18q3-7 7 0v18M776 1018v-2h4v2" fill="none" stroke="#000" stroke-width="2"/>
      <path d="M794.500 970.500h16v9h-16z" fill="none" stroke="#000" stroke-dasharray="4 3"/><path d="M801 972h3v3h-3z" fill="#e010e0"/>
    </g></svg>
  </div>
  <div class="mark"></div>
`, (el, root) => {
  const bars = [
    ['5.594', 49, '5.5-\n 5.6'], ['5.604', 49, '5.6-\n 5.7'], ['5.744', 50, '5.7-\n 5.8'], ['5.881', 51, '5.8-\n 5.9'],
    ['6.829', 60, '6.8-\n 6.9'], ['7.181', 63, '7.1-\n 7.2'], ['7.259', 64, '7.2-\n 7.3']
  ]
  root.querySelector('.bars').innerHTML = bars.map(([v, h]) => `<div>${v}<i style="--h: ${h}px"></i></div>`).join('')
  root.querySelector('.keys').innerHTML = bars.map(([, , k]) => `<div>${k}</div>`).join('')
})

/* ---------- photo viewer ---------- */

define('photo-viewer', `
  <style>
    ${base}
    :host { display: flex; flex-direction: column; box-sizing: border-box; height: 100%; background: #fff; border-left: 1px solid #8fa3bc; font: 11px/14px "Liberation Serif", "Noto Sans CJK SC", serif; color: #222; }
    nav { display: flex; align-items: center; gap: 19px; height: 29px; flex: none; padding-left: 9px; border: solid #8fa3bc; border-width: 1px 0; background: linear-gradient(#f5f9fd, #e6eef8 50%, #d7e3f1 51%, #dde8f5); font: 12px/18px "Noto Sans CJK SC", sans-serif; }
    nav a { color: #1e395b; text-decoration: none; white-space: nowrap; }
    nav a.more { margin-right: -4px; }
    nav a.more::after { content: ""; display: inline-block; margin: 0 0 3px 9px; border: 4px solid transparent; border-top: 5px solid #1e395b; border-bottom: 0; }
    .gap { flex: none; height: 66px; background: #edf2f9; }
    .page { flex: 1; min-height: 0; margin-left: 22px; padding-top: 11px; }
    .head { display: grid; grid-template-columns: 52px 348px 1fr; height: 38px; color: #111; }
    .head svg { margin-left: 10px; }
    .brand { display: grid; align-content: start; gap: 2px; font: bold 20px/24px "Noto Sans CJK SC", sans-serif; }
    .brand small { font: bold 14px/12px "Liberation Serif", serif; }
    h1 { margin: 0; font: 20px/42px "Liberation Serif", "Noto Sans CJK SC", serif; }
    .doc { display: grid; grid-template-columns: 181px 1fr; grid-template-rows: 17px 1fr; border: solid #222; border-width: 1px 0 0 1px; }
    .doc h2 { margin: 0; padding-left: 2px; border-bottom: 1px solid #222; font: 13px/16px "Liberation Serif", "Noto Sans CJK SC", serif; }
    .before, .doc h2:first-child { border-right: 1px solid #222; }
    .before { font-size: 13px; line-height: 16px; padding: 1px 2px; white-space: nowrap; }
    .after { padding: 6px 0 0 1px; overflow: hidden; }
    table { width: 798px; table-layout: fixed; border-collapse: collapse; text-align: center; }
    th, td { padding: 0; border: 1px solid #222; font-weight: normal; height: 16px; white-space: nowrap; }
    th { background: #f0f0f0; }
    .pp { font-size: 12px; }
    .tall td { height: 28px; line-height: 13px; }
    .tall td.bold, .bold { font-weight: bold; line-height: 14px; }
  </style>
  <nav><a href="#" class="more">文件(F)</a><a href="#" class="more">打印(P)</a><a href="#">电子邮件(E)</a><a href="#" class="more">刻录(U)</a><a href="#" class="more">打开(O)</a></nav>
  <div class="gap"></div>
  <div class="page">
    <div class="head">
      <svg width="38" height="36" viewBox="0 0 38 36"><path d="M31 1H8L1 32" fill="none" stroke="#111" stroke-width="2"/><path d="M13 7q20-6 23 4 1 14-17 14l-2 10H7l4-18z" fill="#111"/><path d="M14 11h12M13 14h13M13 17h12" stroke="#aaa"/></svg>
      <div class="brand">兴森快捷<small>FASTPRINT</small></div>
      <h1>PCN变更需求评审表</h1>
    </div>
    <div class="doc">
      <h2>变更前内容：</h2><h2>变更后内容：</h2>
      <div class="before">1）P2厂通孔板孔到线间距能<br>力：<br>≤8层：5.5mil<br>10-14层：6.5mil<br>＞14层：7mil<br>2）P2厂内层隔离环宽最小：<br>①常规能力（小批量≥5m2）<br>≤4层：7mil<br>6-8层：8mil<br>10-14层：9mil<br>16-24层：9.5mil<br>26-36层：10mil<br>②极限能力<br>≤4层：5.5mil<br>6-8层：6mil<br>10-14层：6.5mil<br>16-24层：7mil<br>26-36层：8mil</div>
      <div class="after">
        <table>
          <colgroup><col width="63"><col width="70"><col width="65"><col width="81"><col width="74"><col width="75"><col width="74"><col width="74"><col width="74"><col width="74"><col width="74"></colgroup>
          <thead><tr><th>能力名称</th><th colspan="2">条件</th><th>预叠方式</th><th>能力类型</th><th>≤4层</th><th>5-8层</th><th>9-12层</th><th>13-16层</th><th>17-20层</th><th></th></tr></thead>
          <tbody>
            <tr><td rowspan="16">MASS-LAM<br>能力</td><td rowspan="4">普通板<br>（非假板结<br>构）</td><td rowspan="2" class="pp">PP张数≤2张</td><td>铆合</td><td rowspan="8" class="bold">最小孔到线间<br>距/mil</td><td rowspan="4">5</td><td>6.4</td><td>8</td><td colspan="3">/</td></tr>
            <tr><td>绑定+铆合</td><td>5.7</td><td>6.5</td><td>6.9</td><td>7.3</td><td></td></tr>
            <tr><td rowspan="2" class="pp">PP张数≥3张</td><td>铆合</td><td>6.9</td><td>8.5</td><td colspan="3">/</td></tr>
            <tr><td>绑定+铆合</td><td>6.1</td><td>6.9</td><td>7.3</td><td>7.8</td><td></td></tr>
            <tr><td rowspan="4">假板结构</td><td rowspan="2" class="pp">PP张数≤2张</td><td>铆合</td><td>6.4</td><td>8.5</td><td colspan="4">/</td></tr>
            <tr><td>绑定+铆合</td><td>5.5</td><td>6.8</td><td>7.2</td><td>7.6</td><td>8</td><td></td></tr>
            <tr><td rowspan="2" class="pp">PP张数≥3张</td><td>铆合</td><td>6.9</td><td>9</td><td colspan="4">/</td></tr>
            <tr><td>绑定+铆合</td><td>5.5</td><td>7.3</td><td>7.6</td><td>8.1</td><td>8.5</td><td></td></tr>
            <tr class="tall"><td rowspan="4">普通板<br>（非假板结<br>构）</td><td rowspan="2" class="pp">PP张数≤2张</td><td>铆合</td><td rowspan="8" class="bold">最小内层隔离<br>环宽(包含正片<br>层孔到铜皮的<br>情况)/mil</td><td rowspan="4">7.0<br>（局部6.0）</td><td>7.9<br>（局部7.4）</td><td>9.5<br>（局部9.0）</td><td colspan="3">/</td></tr>
            <tr class="tall"><td>绑定+铆合</td><td>7.2<br>（局部6.7）</td><td>8.0<br>（局部7.5）</td><td>8.4<br>（局部7.9）</td><td>8.8<br>（局部8.3）</td><td></td></tr>
            <tr class="tall"><td rowspan="2" class="pp">PP张数≥3张</td><td>铆合</td><td>8.4<br>（局部7.9）</td><td>10<br>（局部9.5）</td><td colspan="3">/</td></tr>
            <tr class="tall"><td>绑定+铆合</td><td>7.6<br>（局部7.1）</td><td>8.4<br>（局部7.9）</td><td>8.8<br>（局部8.3）</td><td></td><td></td></tr>
            <tr class="tall"><td rowspan="4">假板结构</td><td rowspan="2" class="pp">PP张数≤2张</td><td>铆合</td><td>7.9<br>（局部7.4）</td><td>10.0<br>（局部9.5）</td><td colspan="4">/</td></tr>
            <tr class="tall"><td>绑定+铆合</td><td>7.0<br>（局部6.5）</td><td>8.3<br>（局部7.8）</td><td>8.7<br>（局部8.2）</td><td>9.1<br>（局部8.6）</td><td>9.5<br>（局部9.0）</td><td></td></tr>
            <tr class="tall"><td rowspan="2"></td><td></td><td>8.4<br>&nbsp;</td><td>10.5<br>&nbsp;</td><td colspan="4"></td></tr>
            <tr class="tall"><td></td><td></td><td></td><td colspan="4"></td></tr>
          </tbody>
        </table>
      </div>
    </div>
  </div>
`)

define('fish-arrow', `
  <style>:host { display: block; pointer-events: none; } svg { display: block; }</style>
  <svg width="120" height="130"><path d="M13 13L92 103" stroke="#f0f" stroke-width="5" stroke-linecap="round"/><path d="M107 123L82 107l9-5 9-10z" fill="#f0f" stroke="#f0f" stroke-width="2"/></svg>
`)

define('speed-ball', `
  <style>
    :host { display: grid; align-items: center; box-sizing: border-box; width: 47px; height: 47px; padding-left: 2px; border: 2px solid #dfe8df; border-radius: 50%; background: radial-gradient(circle at 40% 20%, #9be89b, #2cb34a 60%, #5fd070); box-shadow: 0 1px 4px rgba(0, 0, 0, .6); color: #fff; font: bold 11px/14px "DejaVu Sans", sans-serif; }
  </style>
  <span>67</span>
`)
</script>
</body>
</html>
